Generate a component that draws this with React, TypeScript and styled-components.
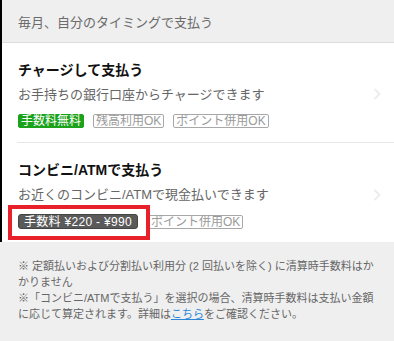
import { FunctionComponent } from 'react';
import styled, { createGlobalStyle } from 'styled-components';

const GlobalStyle = createGlobalStyle`
  body {
    margin: 0;
    background-color: #efefef;
    font-family: "Liberation Sans", "Noto Sans CJK JP", sans-serif;
    -webkit-font-smoothing: antialiased;
  }
`;

const Page = styled.div`
  width: 394px;
  min-height: 341px;
  background-color: #efefef;
`;

const Top = styled.div`
  border-left: 2px solid #000;
`;

const SectionHeader = styled.div`
  display: flex;
  align-items: center;
  box-sizing: border-box;
  height: 43px;
  padding: 1px 0 0 16px;
  border-bottom: 1px solid #dcdcdc;
  font-size: 13px;
  color: #6b6b6b;
`;

const Card = styled.div`
  background-color: #fff;
`;

const Item = styled.div<{ $divider?: boolean }>`
  display: flex;
  align-items: center;
  margin-left: 15px;
  padding: 17px 13px ${(p) => (p.$divider ? '13px' : '14px')} 1px;
  border-top: ${(p) => (p.$divider ? '1px solid #e6e6e6' : 'none')};
`;

const Content = styled.div`
  flex: 1;
  display: flex;
  flex-direction: column;
`;

const Title = styled.div`
  font-size: 14px;
  font-weight: 700;
  line-height: 20px;
  color: #111;
`;

const Description = styled.div`
  margin-top: 6px;
  font-size: 13px;
  line-height: 18px;
  color: #666;
`;

const Tags = styled.div`
  margin-top: 10px;
  display: flex;
  align-items: center;
  gap: 9px;
`;

const Tag = styled.span<{ $variant?: 'green' | 'dark' | 'outline' }>`
  display: inline-flex;
  align-items: center;
  box-sizing: border-box;
  height: ${(p) => (p.$variant === 'dark' ? '15px' : '14px')};
  padding: ${(p) => (p.$variant === 'dark' ? '0 5px' : '0 2px')};
  font-size: 12px;
  line-height: 1;
  letter-spacing: ${(p) => (p.$variant === 'dark' ? '0.3px' : '0')};
  border-radius: ${(p) => (p.$variant === 'dark' ? '3px' : '2px')};
  white-space: nowrap;
  color: ${(p) => (p.$variant === 'outline' ? '#9a9a9a' : '#fff')};
  background-color: ${(p) =>
    p.$variant === 'green' ? '#1ba21b' : p.$variant === 'dark' ? '#5a5a5a' : 'transparent'};
  border: 1px solid
    ${(p) => (p.$variant === 'outline' ? '#a8a8a8' : p.$variant === 'dark' ? '#444' : '#1ba21b')};
`;

const Highlight = styled.span`
  position: relative;
  display: inline-flex;
  margin-right: 1px;

  &::after {
    content: '';
    position: absolute;
    left: -10px;
    right: -12px;
    top: -9px;
    bottom: -11px;
    border: 4px solid #e8202a;
  }
`;

const Chevron = styled.svg`
  width: 8px;
  height: 12px;
  flex: none;
`;

const Notes = styled.div`
  padding: 16px 16px 20px 18px;
  font-size: 11px;
  line-height: 16px;
  color: #666;
`;

const Link = styled.a`
  color: #2a86d8;
  text-decoration: underline;
`;

const Arrow: FunctionComponent = () => (
  <Chevron viewBox="0 0 8 12">
    <path d="M1.5 1l5 5-5 5" fill="none" stroke="#ececec" strokeWidth="1.8" />
  </Chevron>
);

const App: FunctionComponent = (): JSX.Element => {
  return (
    <Page>
      <GlobalStyle />
      <Top>
        <SectionHeader>毎月、自分のタイミングで支払う</SectionHeader>
        <Card>
          <Item>
            <Content>
              <Title>チャージして支払う</Title>
              <Description>お手持ちの銀行口座からチャージできます</Description>
              <Tags>
                <Tag $variant="green">手数料無料</Tag>
                <Tag $variant="outline">残高利用OK</Tag>
                <Tag $variant="outline">ポイント併用OK</Tag>
              </Tags>
            </Content>
            <Arrow />
          </Item>
          <Item $divider>
            <Content>
              <Title>コンビニ/ATMで支払う</Title>
              <Description>お近くのコンビニ/ATMで現金払いできます</Description>
              <Tags>
                <Highlight>
                  <Tag $variant="dark">手数料 ¥220 - ¥990</Tag>
                </Highlight>
                <Tag $variant="outline">ポイント併用OK</Tag>
              </Tags>
            </Content>
            <Arrow />
          </Item>
        </Card>
      </Top>
      <Notes>
        <div>※ 定額払いおよび分割払い利用分 (2 回払いを除く) に清算時手数料はかかりません</div>
        <div>
          ※「コンビニ/ATMで支払う」を選択の場合、清算時手数料は支払い金額に応じて算定されます。詳細は
          <Link href="#">こちら</Link>をご確認ください。
        </div>
      </Notes>
    </Page>
  );
};

export default App;
